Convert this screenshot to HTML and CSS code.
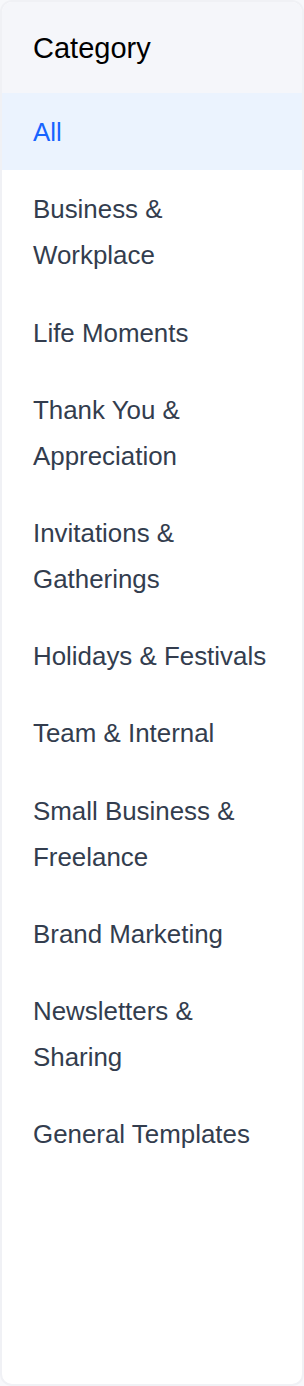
FILE: index.html
```html
<!DOCTYPE html>
<html lang="en">
<head>
<meta charset="utf-8">
<title>Category</title>
<link rel="stylesheet" href="styles.css">
</head>
<body>
<aside class="card">
  <div class="header">Category</div>
  <ul class="list">
    <li class="item active">All</li>
    <li class="item">Business &amp; Workplace</li>
    <li class="item">Life Moments</li>
    <li class="item">Thank You &amp; Appreciation</li>
    <li class="item">Invitations &amp; Gatherings</li>
    <li class="item">Holidays &amp; Festivals</li>
    <li class="item">Team &amp; Internal</li>
    <li class="item">Small Business &amp; Freelance</li>
    <li class="item">Brand Marketing</li>
    <li class="item">Newsletters &amp; Sharing</li>
    <li class="item">General Templates</li>
  </ul>
</aside>
</body>
</html>
```
FILE: styles.css
```css
html, body {
  margin: 0;
  padding: 0;
  background: #f7f8fb;
}
body {
  font-family: "Liberation Sans", Arial, sans-serif;
}
.card {
  box-sizing: border-box;
  width: 304px;
  height: 1386px;
  border: 2px solid #f0f1f5;
  border-radius: 12px;
  background: #ffffff;
  overflow: hidden;
}
.header {
  box-sizing: border-box;
  height: 91.3px;
  line-height: 91px;
  padding: 1px 0 0 31px;
  background: #f5f6fa;
  font-size: 29px;
  color: #000000;
}
.list {
  list-style: none;
  margin: 0;
  padding: 0;
}
.item {
  padding: 15.8px 31px 15.3px 31px;
  font-size: 25.9px;
  line-height: 46.08px;
  color: #333d4e;
}
.item.active {
  background: #ebf3fe;
  color: #1764ff;
}
```
